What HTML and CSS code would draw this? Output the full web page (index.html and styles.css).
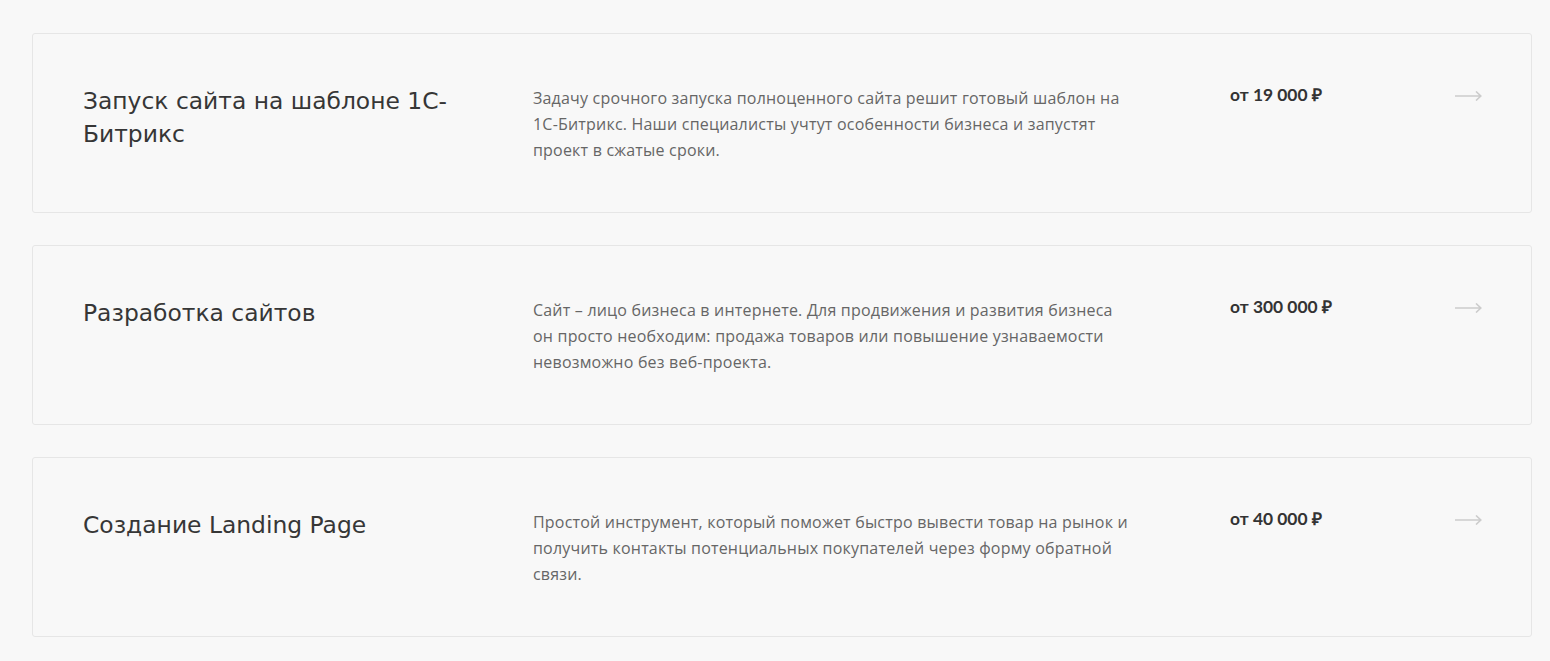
FILE: index.html
```html
<!DOCTYPE html>
<html lang="ru">
<head>
    <meta charset="UTF-8">
    <meta name="viewport" content="width=device-width, initial-scale=1.0">
    <title>Услуги</title>
    <link rel="stylesheet" href="styles.css">
</head>
<body>
    <div class="services">
        <a class="service" href="#">
            <div class="service-title">Запуск сайта на шаблоне 1С-Битрикс</div>
            <div class="service-text">Задачу срочного запуска полноценного сайта решит готовый шаблон на 1С-Битрикс. Наши специалисты учтут особенности бизнеса и запустят проект в сжатые сроки.</div>
            <div class="service-price">от 19 000 ₽</div>
            <div class="service-arrow">
                <svg width="27" height="10" viewBox="0 0 27 10"><path d="M0 5h26M21 0.5l4.8 4.5-4.8 4.5" fill="none" stroke="#cccccc" stroke-width="1.6"/></svg>
            </div>
        </a>

        <a class="service" href="#">
            <div class="service-title">Разработка сайтов</div>
            <div class="service-text">Сайт – лицо бизнеса в интернете. Для продвижения и развития бизнеса он просто необходим: продажа товаров или повышение узнаваемости невозможно без веб-проекта.</div>
            <div class="service-price">от 300 000 ₽</div>
            <div class="service-arrow">
                <svg width="27" height="10" viewBox="0 0 27 10"><path d="M0 5h26M21 0.5l4.8 4.5-4.8 4.5" fill="none" stroke="#cccccc" stroke-width="1.6"/></svg>
            </div>
        </a>

        <a class="service" href="#">
            <div class="service-title">Создание Landing Page</div>
            <div class="service-text">Простой инструмент, который поможет быстро вывести товар на рынок и получить контакты потенциальных покупателей через форму обратной связи.</div>
            <div class="service-price">от 40 000 ₽</div>
            <div class="service-arrow">
                <svg width="27" height="10" viewBox="0 0 27 10"><path d="M0 5h26M21 0.5l4.8 4.5-4.8 4.5" fill="none" stroke="#cccccc" stroke-width="1.6"/></svg>
            </div>
        </a>
    </div>
</body>
</html>
```

FILE: styles.css
```css
body {
    margin: 0;
    background-color: #f8f8f8;
    color: #333;
    font-family: 'Open Sans', sans-serif;
}
.services {
    display: flex;
    flex-direction: column;
    gap: 32px;
    padding: 33px 18px 0 32px;
}
.service {
    display: grid;
    grid-template-columns: 450px 697px 225px 27px;
    height: 180px;
    box-sizing: border-box;
    padding: 51px 50px 0 50px;
    border: 1px solid #e6e6e6;
    border-radius: 3px;
    background-color: #f8f8f8;
    text-decoration: none;
    color: inherit;
}
.service-title {
    font-family: 'DejaVu Sans', sans-serif;
    font-size: 23.4px;
    line-height: 33px;
    color: #363636;
    padding-right: 60px;
}
.service-text {
    max-width: 596px;
    font-size: 16px;
    letter-spacing: 0.2px;
    line-height: 26px;
    color: #666;
}
.service-price {
    font-family: 'Lato', sans-serif;
    font-weight: 700;
    font-size: 17.4px;
    line-height: 20px;
    color: #333;
}
.service-arrow {
    margin-top: -1px;
}
```
